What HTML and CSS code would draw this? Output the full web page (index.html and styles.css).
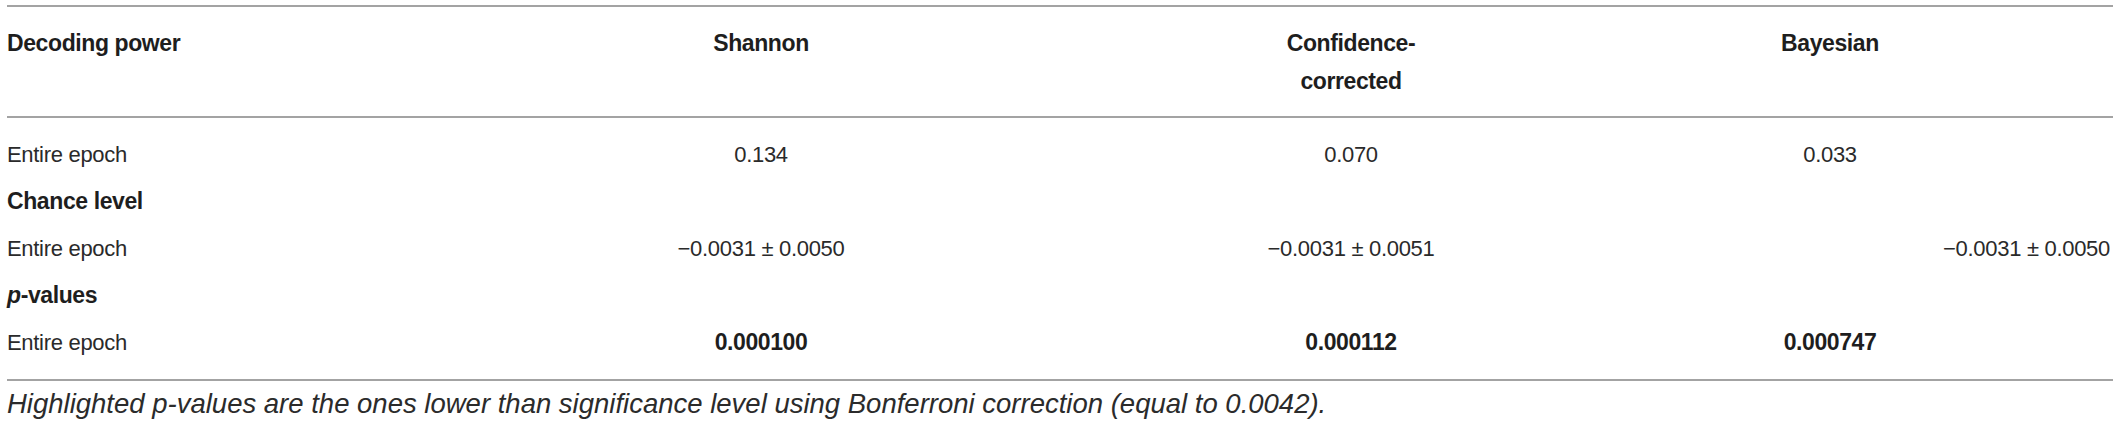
FILE: index.html
```html
<!DOCTYPE html>
<html>
<head>
<meta charset="utf-8">
<link rel="stylesheet" href="styles.css">
</head>
<body>
<div class="wrap">
  <table class="data">
    <colgroup>
      <col class="c1"><col class="c2"><col class="c3"><col class="c4">
    </colgroup>
    <thead>
      <tr>
        <th class="left">Decoding power</th>
        <th>Shannon</th>
        <th>Confidence-<br>corrected</th>
        <th>Bayesian</th>
      </tr>
    </thead>
    <tbody>
      <tr class="first">
        <td class="left">Entire epoch</td>
        <td>0.134</td>
        <td>0.070</td>
        <td>0.033</td>
      </tr>
      <tr>
        <td class="left section">Chance level</td>
        <td></td><td></td><td></td>
      </tr>
      <tr>
        <td class="left">Entire epoch</td>
        <td>−0.0031 ± 0.0050</td>
        <td>−0.0031 ± 0.0051</td>
        <td class="right">−0.0031 ± 0.0050</td>
      </tr>
      <tr>
        <td class="left section"><i>p</i>-values</td>
        <td></td><td></td><td></td>
      </tr>
      <tr class="last">
        <td class="left">Entire epoch</td>
        <td class="strong">0.000100</td>
        <td class="strong">0.000112</td>
        <td class="strong">0.000747</td>
      </tr>
    </tbody>
  </table>
  <p class="note">Highlighted p-values are the ones lower than significance level using Bonferroni correction (equal to 0.0042).</p>
</div>
</body>
</html>
```

FILE: styles.css
```css
html, body {
  margin: 0;
  padding: 0;
  background: #ffffff;
}

body {
  font-family: "Liberation Sans", Arial, sans-serif;
  color: #2a2a2a;
}

.wrap {
  padding: 5px 6px 0 7px;
}

.data {
  width: 2106px;
  table-layout: fixed;
  border-collapse: collapse;
  border-top: 2px solid #a3a3a3;
  border-bottom: 2px solid #a3a3a3;
}

.c1 { width: 360px; }
.c2 { width: 788px; }
.c3 { width: 392px; }
.c4 { width: 566px; }

.data th {
  font-size: 23px;
  letter-spacing: -0.4px;
  font-weight: bold;
  color: #1e1e1e;
  line-height: 38px;
  text-align: center;
  vertical-align: top;
  padding: 17px 0 16px 0;
  border-bottom: 2px solid #a3a3a3;
}

.data td {
  font-size: 22px;
  letter-spacing: -0.3px;
  line-height: 47px;
  height: 47px;
  padding: 0;
  text-align: center;
  vertical-align: middle;
  white-space: nowrap;
}

.data .left {
  text-align: left;
}

.data .right {
  text-align: right;
  padding-right: 3px;
}

.data .section,
.data .strong {
  font-weight: bold;
  font-size: 23px;
  letter-spacing: -0.4px;
  color: #1e1e1e;
}

.data tr.first td {
  padding-top: 13px;
}

.data tr.last td {
  padding-bottom: 13px;
}

.note {
  margin: 0;
  padding-top: 8px;
  font-size: 27.5px;
  line-height: 30px;
  font-style: italic;
  color: #2b2b2b;
}
```
